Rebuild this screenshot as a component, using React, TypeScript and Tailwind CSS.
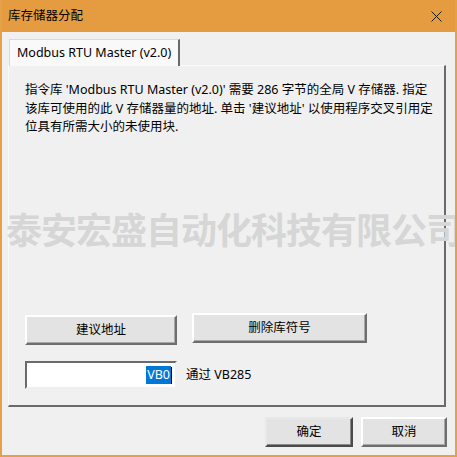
import React from 'react';

const cjk = "font-['Noto_Sans','Noto_Sans_CJK_SC',sans-serif]";

function WinButton({ label, className = '', isDefault = false }: { label: string; className?: string; isDefault?: boolean }) {
    return (
        <button
            className={`flex items-center justify-center bg-[#e3e3e3] text-[12.5px] text-black ${
                isDefault
                    ? 'border-2 border-t-[#e8e8e8] border-l-[#e8e8e8] border-r-[#4a4a4a] border-b-[#4a4a4a] shadow-[inset_-1px_-1px_0_#8a8a8a]'
                    : 'border-2 border-t-white border-l-white border-r-[#6e6e6e] border-b-[#6e6e6e] shadow-[inset_-1px_-1px_0_#a8a8a8]'
            } ${className}`}
        >
            {label}
        </button>
    );
}

export default function App() {
    return (
        <div className={`relative w-[457px] h-[457px] overflow-hidden bg-[#f0f0f0] border-x-2 border-b-2 border-[#e5a04a] flex flex-col ${cjk}`}>
            {/* title bar */}
            <div className="h-[32px] -mx-[2px] bg-[#e59c40] flex items-center justify-between pl-[8px] pr-[12px] shrink-0">
                <span className="text-[12.5px] text-black">库存储器分配</span>
                <svg width="11" height="11" viewBox="0 0 11 11" className="mr-[3px]">
                    <path d="M0.5 0.5 L10.5 10.5 M10.5 0.5 L0.5 10.5" stroke="#1a1a1a" strokeWidth="1" />
                </svg>
            </div>

            {/* tab control */}
            <div className="flex flex-col pl-[6px] pr-[9px] pt-[7px]">
                <div className="flex">
                    <div className="h-[27px] ml-[1px] w-[171px] bg-[#f9f9f9] border-l border-t border-[#dadada] border-r-2 border-r-[#6a6a6a] flex items-center pl-[7px] text-[12.5px] text-black -mb-px relative z-10 whitespace-nowrap">
                        Modbus RTU Master (v2.0)
                    </div>
                </div>
                <div className="h-[342px] bg-[#f0f0f0] border-t border-l border-[#fafafa] border-r-2 border-r-[#6a6a6a] border-b-2 border-b-[#6a6a6a] flex flex-col px-[16px] pt-[15px] pb-[16px]">
                    <div className="text-[12.5px] leading-[18.5px] text-black whitespace-nowrap">
                        <div>指令库 'Modbus RTU Master (v2.0)' 需要 286 字节的全局 V 存储器. 指定</div>
                        <div>该库可使用的此 V 存储器量的地址. 单击 '建议地址' 以使用程序交叉引用定</div>
                        <div>位具有所需大小的未使用块.</div>
                    </div>
                    <div className="mt-auto flex items-start gap-[15px]">
                        <WinButton label="建议地址" className="w-[152px] h-[30px] mt-[2px]" />
                        <WinButton label="删除库符号" className="w-[175px] h-[30px]" />
                    </div>
                    <div className="mt-[16px] flex items-center gap-[9px]">
                        <div className="w-[152px] h-[28px] bg-white border-2 border-t-[#6a6a6a] border-l-[#6a6a6a] border-r-[#f0f0f0] border-b-[#f0f0f0] flex items-center justify-end pr-[3px]">
                            <span className="bg-[#0078d7] text-white text-[12.5px] leading-[18px] px-px">VB0</span>
                            <span className="w-px h-[17px] bg-black" />
                        </div>
                        <span className="text-[12.5px] text-black">通过 VB285</span>
                    </div>
                </div>
            </div>

            {/* dialog buttons */}
            <div className="flex justify-end gap-[8px] pr-[8px] pt-[10px]">
                <WinButton label="确定" className="w-[88px] h-[30px]" isDefault />
                <WinButton label="取消" className="w-[86px] h-[30px]" />
            </div>

            {/* watermark */}
            <div className="absolute left-[4px] top-[208px] pointer-events-none whitespace-nowrap text-[36px] font-bold leading-[40px] tracking-[-1px] text-[#d6d6d6] font-['Noto_Sans_CJK_SC',sans-serif]">
                泰安宏盛自动化科技有限公司
            </div>
        </div>
    );
}
